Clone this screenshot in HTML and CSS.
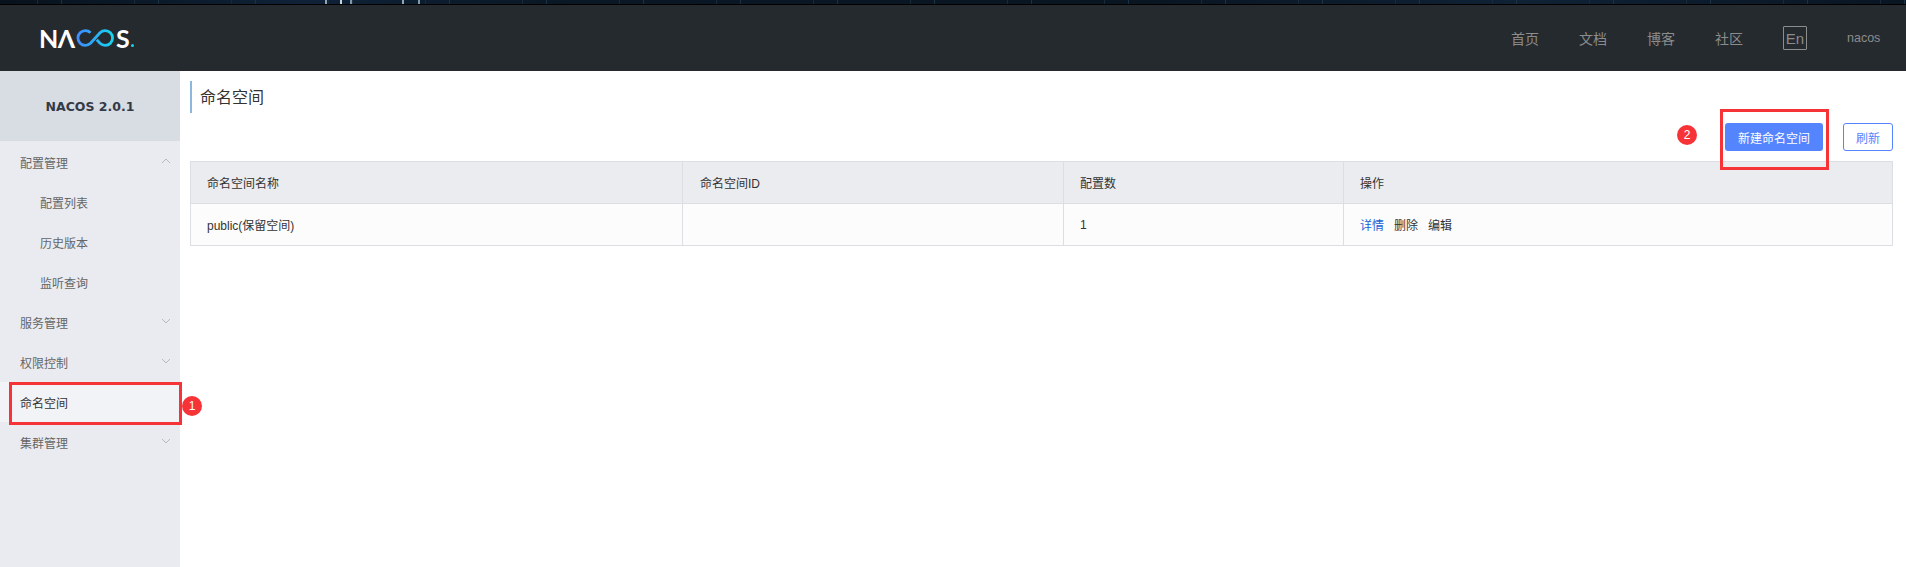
FILE: index.html
```html
<!DOCTYPE html>
<html lang="zh">
<head>
<meta charset="utf-8">
<title>Nacos</title>
<link rel="stylesheet" href="styles.css">
</head>
<body>
<div class="strip"></div>
<header class="header">
  <div class="logo">
    <span class="logo-text tight">NΛ</span>
    <svg class="logo-mark" width="39" height="18" viewBox="0 0 39 18">
      <defs>
        <linearGradient id="lg" x1="0" x2="1" y1="0" y2="0">
          <stop offset="0" stop-color="#3f8cff"/>
          <stop offset="1" stop-color="#17d4ee"/>
        </linearGradient>
      </defs>
      <path d="M14.5 3.7 A7.4 7.4 0 1 0 14.5 14.3 L 24 3.7 A7.4 7.4 0 1 1 24 14.3 L20.8 10.7" fill="none" stroke="url(#lg)" stroke-width="2.8"/>
    </svg>
    <span class="logo-text">S</span><span class="logo-dot"></span>
  </div>
  <nav class="nav">
    <a class="nav-link">首页</a>
    <a class="nav-link">文档</a>
    <a class="nav-link">博客</a>
    <a class="nav-link">社区</a>
    <span class="lang">En</span>
    <span class="user">nacos</span>
  </nav>
</header>
<div class="main">
  <aside class="sidebar">
    <div class="side-head">NACOS 2.0.1</div>
    <div class="menu">
      <div class="item">配置管理<svg class="chev" width="10" height="6" viewBox="0 0 10 6"><path d="M1 5 L5 1 L9 5" fill="none" stroke="#b4b9c2" stroke-width="1"/></svg></div>
      <div class="item sub">配置列表</div>
      <div class="item sub">历史版本</div>
      <div class="item sub">监听查询</div>
      <div class="item">服务管理<svg class="chev" width="10" height="6" viewBox="0 0 10 6"><path d="M1 1 L5 5 L9 1" fill="none" stroke="#b4b9c2" stroke-width="1"/></svg></div>
      <div class="item">权限控制<svg class="chev" width="10" height="6" viewBox="0 0 10 6"><path d="M1 1 L5 5 L9 1" fill="none" stroke="#b4b9c2" stroke-width="1"/></svg></div>
      <div class="item active">命名空间</div>
      <div class="item">集群管理<svg class="chev" width="10" height="6" viewBox="0 0 10 6"><path d="M1 1 L5 5 L9 1" fill="none" stroke="#b4b9c2" stroke-width="1"/></svg></div>
    </div>
  </aside>
  <main class="content">
    <h1 class="title">命名空间</h1>
    <div class="toolbar">
      <button class="btn primary">新建命名空间</button>
      <button class="btn outline">刷新</button>
    </div>
    <div class="table">
      <div class="row head">
        <div class="cell c1">命名空间名称</div>
        <div class="cell c2">命名空间ID</div>
        <div class="cell c3">配置数</div>
        <div class="cell c4">操作</div>
      </div>
      <div class="row body">
        <div class="cell c1">public(保留空间)</div>
        <div class="cell c2"></div>
        <div class="cell c3">1</div>
        <div class="cell c4 actions"><a class="link">详情</a><a>删除</a><a>编辑</a></div>
      </div>
    </div>
  </main>
</div>
<div class="mark box-one"></div>
<div class="mark box-two"></div>
<div class="badge badge-one">1</div>
<div class="badge badge-two">2</div>
</body>
</html>
```

FILE: styles.css
```css
* { box-sizing: border-box; }
html, body { margin: 0; height: 100%; }
body {
  position: relative;
  height: 567px;
  overflow: hidden;
  background: #fff;
  font-family: "Liberation Sans", "Noto Sans CJK SC", sans-serif;
  font-size: 12px;
  color: #333;
  display: flex;
  flex-direction: column;
}
.strip {
  height: 5px;
  flex: none;
  background:
    linear-gradient(90deg, transparent 325px, #8fa6b4 325px, #8fa6b4 327px, transparent 327px, transparent 340px, #c6d4dc 340px, #c6d4dc 342px, transparent 342px, transparent 350px, #7f99aa 350px, #7f99aa 352px, transparent 352px, transparent 402px, #8fa6b4 402px, #8fa6b4 404px, transparent 404px, transparent 418px, #7f99aa 418px, #7f99aa 420px, transparent 420px),
    repeating-linear-gradient(90deg, transparent 0, transparent 37px, #18293a 37px, #18293a 38px, transparent 38px, transparent 61px, #1d3144 61px, #1d3144 62px, transparent 62px, transparent 97px),
    linear-gradient(90deg, #08121c, #0f2238 16%, #0a1724 30%, #0a1522 60%, #0f2236 80%, #0a1522);
  border-bottom: 1px solid #000;
}
.header {
  height: 66px;
  flex: none;
  background: #252a2f;
  display: flex;
  align-items: center;
  justify-content: space-between;
  padding: 0 26px 0 39px;
}
.logo { display: flex; align-items: center; height: 24px; color: #fff; }
.logo-text { font-family: "Lato", sans-serif; font-size: 25px; line-height: 24px; font-weight: 700; color: #fff; }
.tight { letter-spacing: -0.5px; width: 37px; }
.logo-mark { margin: 0 1px 0 0; }
.logo-dot { width: 3px; height: 3px; margin: 15px 0 0 1px; background: #18d4e8; border-radius: 50%; }
.nav { display: flex; align-items: center; color: #8c8c8c; font-size: 14px; }
.nav-link { margin-right: 40px; width: 28px; }
.lang {
  width: 24px; height: 24px;
  border: 1px solid #8c8c8c;
  border-radius: 1px;
  display: flex; align-items: center; justify-content: center;
  font-size: 15px;
  margin-right: 40px;
}
.user { font-size: 12.5px; width: 33px; white-space: nowrap; }
.main { flex: 1; display: flex; min-height: 0; }
.sidebar { width: 180px; flex: none; background: #e9ebf0; }
.side-head {
  height: 70px;
  background: #d8dce3;
  display: flex; align-items: center; justify-content: center;
  font-family: "DejaVu Sans", sans-serif;
  font-weight: 700;
  font-size: 12.5px;
  color: #333a46;
}
.menu { padding-top: 1px; }
.item {
  height: 40px;
  display: flex; align-items: center; justify-content: space-between;
  padding: 0 9px 0 20px;
  color: #666;
  font-size: 12px;
}
.item.sub { padding-left: 40px; }
.item.active { background: #f2f3f7; color: #333; }
.chev { margin-top: -3px; }
.content { flex: 1; min-width: 0; padding: 10px 13px 0 10px; }
.title {
  margin: 0;
  height: 32px;
  border-left: 2px solid #8cb8e0;
  padding-left: 8px;
  font-size: 16px;
  font-weight: 400;
  line-height: 34px;
  color: #333;
}
.toolbar { display: flex; justify-content: flex-end; gap: 20px; margin-top: 10px; height: 38px; }
.btn {
  height: 28px;
  border-radius: 3px;
  font: inherit;
  padding: 0;
  font-size: 12px;
}
.primary { width: 98px; background: #5584ff; border: 0; color: #fff; }
.outline { width: 50px; background: #fff; border: 1px solid #5584ff; color: #5584ff; }
.table { border: 1px solid #dcdee3; }
.row { display: grid; grid-template-columns: 491px 381px 280px 1fr; height: 41px; }
.row.body { border-top: 1px solid #dcdee3; background: #fcfcfc; height: 42px; }
.row.head { background: #ebecf0; }
.cell {
  padding: 0 16px;
  display: flex; align-items: center;
  color: #333;
  border-left: 1px solid #dcdee3;
}
.cell.c1 { border-left: 0; }
.cell.c2 { padding-left: 17px; }
.actions { gap: 10px; }
.link { color: #1a62d4; }
.mark { position: absolute; border: 3px solid #f63438; }
.box-one { left: 9px; top: 382px; width: 173px; height: 43px; }
.box-two { left: 1720px; top: 109px; width: 109px; height: 61px; }
.badge {
  position: absolute;
  width: 20px; height: 20px;
  border-radius: 50%;
  background: #f63438;
  color: #fff;
  font-size: 12px;
  display: flex; align-items: center; justify-content: center;
}
.badge-one { left: 182px; top: 396px; }
.badge-two { left: 1677px; top: 125px; }
```
